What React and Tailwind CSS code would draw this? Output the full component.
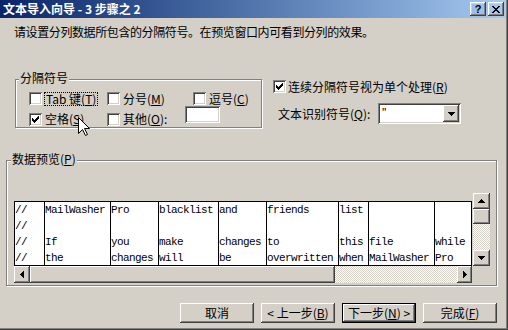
import React from 'react';

// classic win2k bevels
const raised = 'shadow-[inset_-1px_-1px_#404040,inset_1px_1px_#ffffff,inset_-2px_-2px_#808080,inset_2px_2px_#d4d0c8]';
const sunken = 'shadow-[inset_1px_1px_#808080,inset_-1px_-1px_#ffffff,inset_2px_2px_#404040,inset_-2px_-2px_#d4d0c8]';
const etched = 'border border-[#808080] shadow-[inset_1px_1px_#ffffff,1px_1px_#ffffff]';
const checker = 'bg-[image:repeating-conic-gradient(#d4d0c8_0_25%,#ffffff_0_50%)] bg-[length:2px_2px]';

const Arrow = ({ dir }) => {
  const paths = {
    up: 'M3 0h1v1h1v1h1v1h1v1H0V3h1V2h1V1h1z',
    down: 'M0 0h7v1H6v1H5v1H4v1H3V3H2V2H1V1H0z',
    left: 'M3 0h1v7H3V6H2V5H1V4H0V3h1V2h1V1h1z',
    right: 'M0 0h1v1h1v1h1v1h1v1H3v1H2v1H1v1H0z',
  };
  const vert = dir === 'up' || dir === 'down';
  return (
    <svg width={vert ? 7 : 4} height={vert ? 4 : 7} viewBox={vert ? '0 0 7 4' : '0 0 4 7'} shapeRendering="crispEdges">
      <path d={paths[dir]} fill="#000" />
    </svg>
  );
};

const Box = ({ checked }) => (
  <span className={`w-[13px] h-[13px] shrink-0 bg-white flex items-center justify-center ${sunken}`}>
    {checked && (
      <svg width="7" height="7" viewBox="0 0 7 7" shapeRendering="crispEdges">
        <path d="M0 2L2 4L7 -1V2L2 7L0 5Z" fill="#000" />
      </svg>
    )}
  </span>
);

const U = ({ children }) => <span className="underline underline-offset-[1px]">{children}</span>;

const Btn = ({ children, main }) => (
  <div className={`w-[74px] h-[20px] flex items-center justify-center ${main ? 'border border-black' : ''}`}>
    <div className={`w-full h-full flex items-center justify-center ${raised}`}>{children}</div>
  </div>
);

const cols = [
  { w: 'w-[29px]', rows: ['//', '//', '//', '//'] },
  { w: 'w-[66px]', rows: ['MailWasher', '', 'If', 'the'] },
  { w: 'w-[48px]', rows: ['Pro', '', 'you', 'changes'] },
  { w: 'w-[60px]', rows: ['blacklist', '', 'make', 'will'] },
  { w: 'w-[48px]', rows: ['and', '', 'changes', 'be'] },
  { w: 'w-[72px]', rows: ['friends', '', 'to', 'overwritten'] },
  { w: 'w-[30px]', rows: ['list', '', 'this', 'when'] },
  { w: 'w-[66px]', rows: ['', '', 'file', 'MailWasher'] },
  { w: 'flex-1', rows: ['', '', 'while', 'Pro'] },
];

export default function App() {
  return (
    <div className="relative w-[508px] h-[330px] overflow-hidden bg-[#d4d0c8] text-black text-[12px] leading-[14px] font-['Noto_Sans_CJK_SC',sans-serif] shadow-[inset_-1px_-1px_#404040,inset_-2px_-2px_#808080]">
      {/* title bar */}
      <div className="h-[18px] w-[506px] flex items-center bg-linear-to-r from-[#0a246a] to-[#a6caf0] pl-[3px] pr-[2px]">
        <span className="text-white font-bold">文本导入向导 - 3 步骤之 2</span>
        <div className="ml-auto flex gap-[2px]">
          <div className={`w-[16px] h-[14px] flex items-center justify-center text-[11px] font-bold leading-none font-['Liberation_Sans',sans-serif] ${raised}`}>?</div>
          <div className={`w-[16px] h-[14px] flex items-center justify-center ${raised}`}>
            <svg width="8" height="7" viewBox="0 0 8 7" shapeRendering="crispEdges">
              <path d="M0 0h2v1h1v1h2V1h1V0h2v1H7v1H6v1H5v1h1v1h1v1h1v1H6V6H5V5H3v1H2v1H0V6h1V5h1V4h1V3H2V2H1V1H0z" fill="#000" />
            </svg>
          </div>
        </div>
      </div>

      <p className="mt-[7px] ml-[14px] tracking-[-0.4px]">请设置分列数据所包含的分隔符号。在预览窗口内可看到分列的效果。</p>

      <div className="flex mt-[40px]">
        {/* 分隔符号 */}
        <div className={`relative ml-[15px] w-[247px] h-[49px] pl-[13px] pt-[12px] ${etched}`}>
          <span className="absolute left-[3px] top-[-9px] px-[1px] bg-[#d4d0c8]">分隔符号</span>
          <div className="flex items-center h-[13px]">
            <div className="w-[78px] flex items-center">
              <Box />
              <span className="ml-[2px] px-[1px] border border-dotted border-black leading-[12px]">Tab 键(<U>T</U>)</span>
            </div>
            <div className="w-[86px] flex items-center">
              <Box />
              <span className="ml-[3px]">分号(<U>M</U>)</span>
            </div>
            <div className="flex items-center">
              <Box />
              <span className="ml-[3px]">逗号(<U>C</U>)</span>
            </div>
          </div>
          <div className="flex items-start mt-[1px]">
            <div className="w-[78px] mt-[6px] flex items-center">
              <Box checked />
              <span className="ml-[3px]">空格(<U>S</U>)</span>
            </div>
            <div className="w-[78px] mt-[6px] flex items-center">
              <Box />
              <span className="ml-[3px]">其他(<U>O</U>):</span>
            </div>
            <div className={`w-[35px] h-[17px] bg-white ${sunken}`} />
          </div>
        </div>

        {/* right options */}
        <div className="ml-[11px] pt-[1px] flex flex-col">
          <div className="flex items-center h-[13px]">
            <Box checked />
            <span className="ml-[2px]">连续分隔符号视为单个处理(<U>R</U>)</span>
          </div>
          <div className="flex items-center mt-[10px] pl-[5px]">
            <span className="w-[100px]">文本识别符号(<U>Q</U>):</span>
            <div className={`w-[83px] h-[21px] bg-white flex p-[2px] ${sunken}`}>
              <span className="flex-1 pl-[2px] pt-[1px] font-['Liberation_Sans',sans-serif]">"</span>
              <div className={`w-[16px] h-full flex items-center justify-center bg-[#d4d0c8] ${raised}`}>
                <Arrow dir="down" />
              </div>
            </div>
          </div>
        </div>
      </div>

      {/* 数据预览 */}
      <div className={`relative ml-[6px] mt-[32px] w-[491px] h-[126px] pl-[7px] pt-[32px] ${etched}`}>
        <span className="absolute left-[4px] top-[-9px] px-[1px] bg-[#d4d0c8]">数据预览(<U>P</U>)</span>
        <div className="flex">
          <div className="w-[458px] flex flex-col">
            <div className="h-[8px]" />
            <div className="h-[65px] border border-black bg-white flex overflow-hidden font-['Liberation_Mono',monospace] text-[11px] tracking-[-0.6px] leading-[16px]">
              {cols.map((c, i) => (
                <div key={i} className={`${c.w} shrink-0 ${i ? 'border-l border-black' : ''} overflow-hidden`}>
                  {c.rows.map((r, j) => (
                    <div key={j} className="h-[16px] whitespace-pre">{r}</div>
                  ))}
                </div>
              ))}
            </div>
            <div className="h-[17px] flex">
              <div className={`w-[16px] flex items-center justify-center ${raised}`}><Arrow dir="left" /></div>
              <div className={`w-[305px] ${raised}`} />
              <div className={`flex-1 ${checker}`} />
              <div className={`w-[15px] flex items-center justify-center ${raised}`}><Arrow dir="right" /></div>
            </div>
          </div>
          <div className="ml-[1px] w-[17px] h-[73px] flex flex-col">
            <div className={`h-[16px] flex items-center justify-center ${raised}`}><Arrow dir="up" /></div>
            <div className={`h-[15px] ${raised}`} />
            <div className={`flex-1 ${checker}`} />
            <div className={`h-[16px] flex items-center justify-center ${raised}`}><Arrow dir="down" /></div>
          </div>
        </div>
      </div>

      {/* buttons */}
      <div className="flex mt-[17px] ml-[180px] gap-[7px]">
        <Btn>取消</Btn>
        <Btn>&lt; 上一步(<U>B</U>)</Btn>
        <Btn main>下一步(<U>N</U>) &gt;</Btn>
        <Btn>完成(<U>F</U>)</Btn>
      </div>

      {/* mouse pointer */}
      <svg className="absolute left-[78px] top-[117px]" width="12" height="20" viewBox="0 0 12 20">
        <path d="M0.5 0.5V16.5L4.5 12.5L7.5 18.5L9.5 17.5L6.5 11.5H11.5Z" fill="#fff" stroke="#000" strokeWidth="1" />
      </svg>
    </div>
  );
}
